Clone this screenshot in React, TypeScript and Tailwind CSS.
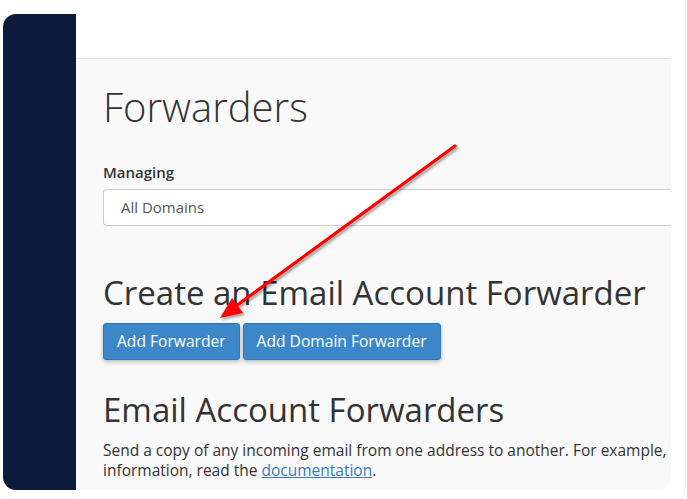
import React from "react";

export default function App() {
  return (
    <div className="relative w-[687px] h-[499px] bg-white overflow-hidden" style={{ fontFamily: "'Open Sans', 'Noto Sans', sans-serif" }}>
      <div className="absolute left-[-20px] top-[-20px] w-[706px] h-[530px] rounded-[24px] border border-[#eeeeee]" />
      <div className="relative ml-[3px] mt-[14px] w-[668px] h-[476px] flex rounded-[13px] overflow-hidden">
        <div className="w-[73px] shrink-0 bg-[#0a1a3c]" />
        <div className="flex-1 flex flex-col min-w-0">
          <div className="h-[45px] shrink-0 bg-white border-b border-[#e6e6e6]" />
          <div className="flex-1 bg-[#f9f9f9] pl-[27px] pt-[26px] overflow-hidden text-[#333]">
            <h1 className="text-[40px] leading-[44px] font-light text-[#333] whitespace-nowrap">Forwarders</h1>
            <div className="mt-[33px] text-[15px] leading-[20px] font-semibold text-[#333]">Managing</div>
            <div className="mt-[7px] h-[37px] bg-white border border-[#cccccc] border-r-0 rounded-l-[4px] flex items-center pl-[17px] text-[15px] text-[#555]">
              All Domains
            </div>
            <h2 className="mt-[47px] text-[33px] leading-[40px] font-normal text-[#333] whitespace-nowrap">Create an Email Account Forwarder</h2>
            <div className="mt-[10px] flex gap-[3px]">
              <button className="h-[37px] px-[13px] bg-[#3b87c9] border border-[#2f78b8] rounded-[3px] text-white text-[15.6px] shadow-[0_2px_4px_rgba(0,0,0,0.25)]">Add Forwarder</button>
              <button className="h-[37px] px-[13px] bg-[#3b87c9] border border-[#2f78b8] rounded-[3px] text-white text-[15.6px] shadow-[0_2px_4px_rgba(0,0,0,0.25)]">Add Domain Forwarder</button>
            </div>
            <h2 className="mt-[30px] text-[33px] leading-[40px] font-normal text-[#333] whitespace-nowrap">Email Account Forwarders</h2>
            <p className="mt-[10px] text-[15.5px] leading-[20px] text-[#333] whitespace-nowrap">
              Send a copy of any incoming email from one address to another. For example,
              <br />
              information, read the <a className="text-[#3a7bc0] underline">documentation</a>.
            </p>
          </div>
        </div>
      </div>
      <svg className="absolute left-0 top-0 pointer-events-none" width="687" height="499">
        <defs>
          <filter id="sh" x="-10%" y="-10%" width="130%" height="130%">
            <feDropShadow dx="2" dy="2" stdDeviation="1.2" floodColor="#000" floodOpacity="0.35" />
          </filter>
        </defs>
        <g filter="url(#sh)">
          <line x1="455" y1="146" x2="236" y2="306" stroke="#ff0000" strokeWidth="3.2" strokeLinecap="round" />
          <polygon points="220,318 232,298 243,313" fill="#ff0000" />
        </g>
      </svg>
    </div>
  );
}
